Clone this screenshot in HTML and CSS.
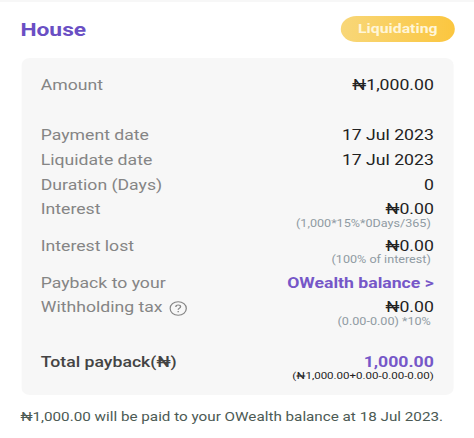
FILE: index.html
```html
<!DOCTYPE html>
<html lang="en">
<head>
  <meta charset="UTF-8">
  <title>House</title>
  <meta name="viewport" content="width=device-width, initial-scale=1.0">
  <link rel="stylesheet" href="styles.css">
</head>
<body>
  <main class="screen">
    <header class="header">
      <h1>House</h1>
      <span class="status">Liquidating</span>
    </header>

    <section class="card">
      <div class="row amount">
        <span class="label">Amount</span>
        <span class="value">₦1,000.00</span>
      </div>
      <div class="row">
        <span class="label">Payment date</span>
        <span class="value">17 Jul 2023</span>
      </div>
      <div class="row">
        <span class="label">Liquidate date</span>
        <span class="value">17 Jul 2023</span>
      </div>
      <div class="row">
        <span class="label">Duration (Days)</span>
        <span class="value">0</span>
      </div>
      <div class="row">
        <span class="label">Interest</span>
        <span class="value">₦0.00</span>
      </div>
      <div class="note">(1,000*15%*0Days/365)</div>
      <div class="row">
        <span class="label">Interest lost</span>
        <span class="value">₦0.00</span>
      </div>
      <div class="note">(100% of interest)</div>
      <div class="row">
        <span class="label">Payback to your</span>
        <a class="value link">OWealth balance &gt;</a>
      </div>
      <div class="row">
        <span class="label">Withholding tax
          <svg class="help" viewBox="0 0 16 16" fill="none" stroke="currentColor">
            <circle cx="8" cy="8" r="7.2" stroke-width="1.1"/>
            <path d="M5.9 6.3c0-1.3.9-2.1 2.1-2.1s2.1.8 2.1 1.9c0 1.4-2.1 1.6-2.1 3.3M8 10.7v1.3" stroke-width="1.2"/>
          </svg>
        </span>
        <span class="value">₦0.00</span>
      </div>
      <div class="note">(0.00-0.00) *10%</div>
      <div class="row total">
        <span class="label">Total payback(₦)</span>
        <span class="value">1,000.00</span>
      </div>
      <div class="note total-note">(₦1,000.00+0.00-0.00-0.00)</div>
    </section>

    <p class="footer">₦1,000.00 will be paid to your OWealth balance at 18 Jul 2023.</p>
  </main>
</body>
</html>
```

FILE: styles.css
```css
* {
  box-sizing:border-box;
}
html, body {
  margin:0;
  padding:0;
  background:#fff;
  overflow:hidden;
}
/* wide type: everything is laid out at 395px and stretched to 474px */
.screen {
  width:395px;
  height:438px;
  transform:scaleX(1.2);
  transform-origin:0 0;
  border-top:2px solid #f7f7f7;
  font-family:Roboto, sans-serif;
  font-size:14.7px;
  color:#222;
}
.header {
  display:flex;
  justify-content:space-between;
  align-items:center;
  height:56px;
  padding:0 16px 2px 17px;
}
h1 {
  margin:0;
  font-size:19px;
  font-weight:700;
  color:#6a4fc4;
}
.status {
  width:95px;
  height:26px;
  line-height:26px;
  border-radius:13px;
  background:linear-gradient(90deg, #f8d779, #fbc63f);
  color:#fff6d8;
  font-size:13.2px;
  font-weight:700;
  text-align:center;
}
.card {
  height:337px;
  margin:0 17px 0 17.5px;
  padding:15px 16.5px 0;
  border-radius:7px;
  background:#f7f7f7;
}
.row {
  display:flex;
  justify-content:space-between;
  height:24.6px;
  line-height:24.6px;
}
.amount {
  margin-bottom:25.9px;
}
.label {
  display:flex;
  align-items:center;
  color:#858585;
}
.link {
  color:#7657c8;
  font-weight:700;
}
.help {
  width:15px;
  height:15px;
  margin:2px 0 0 5.5px;
}
.note {
  height:12.2px;
  margin-top:-4.2px;
  margin-bottom:4.2px;
  padding-right:2.5px;
  line-height:12.2px;
  font-size:10.5px;
  text-align:right;
  color:#909ba3;
}
.total {
  margin-top:21.8px;
}
.total .label {
  color:#444;
  font-weight:500;
}
.total .value {
  color:#7657c8;
  font-weight:700;
}
.total-note {
  margin-top:-4.4px;
  padding-right:0;
  font-size:9.6px;
  color:#222;
}
.footer {
  margin:13px 0 0 17px;
  font-size:12.7px;
  line-height:18px;
  white-space:nowrap;
  color:#4c5a54;
}
```
